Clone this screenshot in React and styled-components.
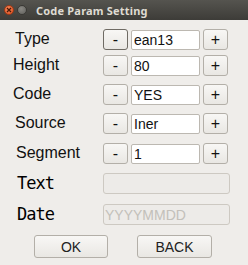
import styled, { createGlobalStyle } from 'styled-components';

const Global = createGlobalStyle`
  html, body {
    margin: 0;
    padding: 0;
    background: #efedea;
  }
  * { box-sizing: border-box; }
`;

const Window = styled.div`
  width: 248px;
  height: 265px;
  display: flex;
  flex-direction: column;
  background: #efedea;
  font-family: 'Liberation Sans', Arial, sans-serif;
  overflow: hidden;
`;

const TitleBar = styled.div`
  height: 20px;
  display: flex;
  align-items: center;
  padding-left: 4px;
  background: linear-gradient(#55544f, #3d3c38);
  color: #dfdbd2;
  font-family: 'Noto Sans', 'DejaVu Sans', sans-serif;
  font-weight: bold;
  font-size: 11px;
`;

const Dot = styled.span`
  width: 10px;
  height: 10px;
  border-radius: 50%;
  margin-right: 3px;
  display: flex;
  align-items: center;
  justify-content: center;
  background: ${p => (p.$close ? 'radial-gradient(circle at 40% 35%, #f58a5c, #de4b1c)' : 'radial-gradient(circle at 40% 35%, #8a8984, #5f5e5a)')};
  border: 1px solid ${p => (p.$close ? '#9e3a16' : '#3a3935')};
`;

const Title = styled.span`
  margin-left: 6px;
  letter-spacing: 0.2px;
`;

const Form = styled.div`
  display: flex;
  flex-direction: column;
  padding-top: 9px;
`;

const Row = styled.div`
  display: flex;
  align-items: center;
  height: 21px;
  margin-top: ${p => p.$gap || 0}px;
`;

const Label = styled.div`
  flex: 0 0 103px;
  padding-left: ${p => p.$indent}px;
  padding-bottom: 2px;
  font-size: 16px;
  color: #111;
  font-family: ${p => (p.$mono ? "'DejaVu Sans Mono', monospace" : "'Liberation Sans', Arial, sans-serif")};
  ${p => p.$mono && 'font-size: 17px; letter-spacing: -1px; color: #000;'}
`;

const Step = styled.button`
  width: 25px;
  height: 21px;
  padding: 0;
  border: 1px solid ${p => (p.$focus ? '#6f6b64' : '#b3afa8')};
  border-radius: 3px;
  background: linear-gradient(#f8f7f5, #e9e7e3);
  font-family: 'Liberation Sans', Arial, sans-serif;
  font-size: 16px;
  color: #111;
  display: flex;
  align-items: center;
  justify-content: center;
`;

const Entry = styled.input`
  width: ${p => p.$w}px;
  height: 20px;
  margin: 0 3px;
  padding: 0 2px;
  border: 1px solid #bcb8b1;
  border-radius: 2px;
  background: #fff;
  font-family: 'Liberation Sans', Arial, sans-serif;
  font-size: 14px;
  color: #111;
  outline: none;
`;

const Disabled = styled.input`
  width: 127px;
  height: 21px;
  margin: 0;
  padding: 0 1px;
  border: 1px solid #cdc9c2;
  border-radius: 3px;
  background: #edebe8;
  font-family: 'Liberation Sans', Arial, sans-serif;
  font-size: 14px;
  outline: none;
  &::placeholder { color: #c3c0ba; }
`;

const Footer = styled.div`
  display: flex;
  gap: 29px;
  padding-left: 34px;
  margin-top: 10px;
`;

const Action = styled.button`
  width: ${p => p.$w}px;
  height: 23px;
  border: 1px solid #b3afa8;
  border-radius: 3px;
  background: linear-gradient(#f8f7f5, #e9e7e3);
  font-family: 'Liberation Sans', Arial, sans-serif;
  font-size: 14px;
  color: #222;
  padding: 0;
`;

const rows = [
  { label: 'Type', value: 'ean13', indent: 15, gap: 0, focus: true },
  { label: 'Height', value: '80', indent: 13, gap: 5 },
  { label: 'Code', value: 'YES', indent: 13, gap: 8 },
  { label: 'Source', value: 'Iner', indent: 15, gap: 8 },
  { label: 'Segment', value: '1', indent: 16, gap: 9 },
];

export default function App() {
  return (
    <>
      <Global />
      <Window>
        <TitleBar>
          <Dot $close>
            <svg width="6" height="6" viewBox="0 0 6 6">
              <path d="M1 1L5 5M5 1L1 5" stroke="#4a1a08" strokeWidth="1.3" />
            </svg>
          </Dot>
          <Dot />
          <Title>Code Param Setting</Title>
        </TitleBar>
        <Form>
          {rows.map(r => (
            <Row key={r.label} $gap={r.gap}>
              <Label $indent={r.indent}>{r.label}</Label>
              <Step $focus={r.focus}>-</Step>
              <Entry $w={69} defaultValue={r.value} />
              <Step>+</Step>
            </Row>
          ))}
          <Row $gap={9}>
            <Label $indent={17} $mono>Text</Label>
            <Disabled disabled />
          </Row>
          <Row $gap={10}>
            <Label $indent={17} $mono>Date</Label>
            <Disabled disabled placeholder="YYYYMMDD" />
          </Row>
          <Footer>
            <Action $w={74}>OK</Action>
            <Action $w={75}>BACK</Action>
          </Footer>
        </Form>
      </Window>
    </>
  );
}
